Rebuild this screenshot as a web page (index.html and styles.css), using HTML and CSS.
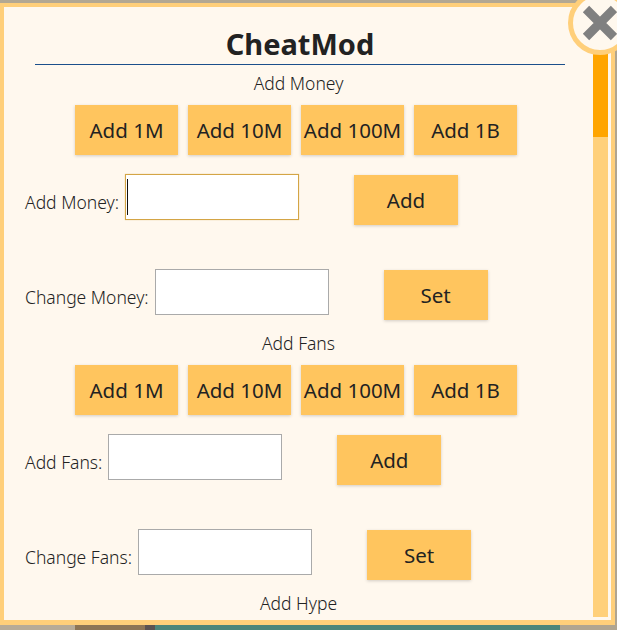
FILE: index.html
```html
<!DOCTYPE html>
<html lang="en">
<head>
    <meta charset="UTF-8">
    <meta name="viewport" content="width=device-width, initial-scale=1.0">
    <title>CheatMod</title>
    <link rel="stylesheet" href="styles.css">
</head>
<body>
    <div class="modal">
        <div class="modal-content">
            <h1 class="modal-title">CheatMod</h1>

            <div class="section-title">Add Money</div>
            <div class="preset-row">
                <button class="btn preset">Add 1M</button>
                <button class="btn preset">Add 10M</button>
                <button class="btn preset">Add 100M</button>
                <button class="btn preset">Add 1B</button>
            </div>
            <div class="input-row first">
                <label for="addMoney">Add Money:</label>
                <span class="field focused"><input type="text" id="addMoney"></span>
                <button class="btn action">Add</button>
            </div>
            <div class="input-row">
                <label for="changeMoney">Change Money:</label>
                <span class="field"><input type="text" id="changeMoney"></span>
                <button class="btn action">Set</button>
            </div>

            <div class="section-title">Add Fans</div>
            <div class="preset-row">
                <button class="btn preset">Add 1M</button>
                <button class="btn preset">Add 10M</button>
                <button class="btn preset">Add 100M</button>
                <button class="btn preset">Add 1B</button>
            </div>
            <div class="input-row first">
                <label for="addFans">Add Fans:</label>
                <span class="field"><input type="text" id="addFans"></span>
                <button class="btn action">Add</button>
            </div>
            <div class="input-row">
                <label for="changeFans">Change Fans:</label>
                <span class="field"><input type="text" id="changeFans"></span>
                <button class="btn action">Set</button>
            </div>

            <div class="section-title">Add Hype</div>
        </div>

        <div class="scrollbar">
            <div class="scroll-thumb"></div>
        </div>

        <button class="close-button" aria-label="Close">
            <svg width="36" height="36" viewBox="0 0 36 36">
                <path d="M4 4 L32 32 M32 4 L4 32" stroke="#808080" stroke-width="9" fill="none"/>
            </svg>
        </button>
    </div>
</body>
</html>
```

FILE: styles.css
```css
* {
    margin: 0;
    padding: 0;
    box-sizing: border-box;
    font-family: "Noto Sans", "Open Sans", sans-serif;
}

body {
    width: 617px;
    height: 630px;
    overflow: hidden;
    background:
        linear-gradient(#b3a893, #b3a893) top / 100% 3px no-repeat,
        linear-gradient(to right, #b7ab97 0 75px, #8d7556 75px 145px, #5b5352 145px 155px, #4c857a 155px 560px, #b0a590 560px);
}

.modal {
    position: relative;
    display: flex;
    width: 615px;
    height: 622px;
    margin-top: 3px;
    background: #fff8ee;
    border: 4px solid #ffcf7a;
    border-bottom-width: 5px;
}

.modal-content {
    flex: 1;
    overflow: hidden;
    color: #222;
}

.modal-title {
    width: 530px;
    margin-left: 31px;
    padding-top: 22px;
    height: 58px;
    text-align: center;
    font-size: 29px;
    font-weight: 700;
    line-height: 30px;
    color: #222;
    border-bottom: 1px solid #1b4f8b;
}

.section-title {
    margin-top: 8px;
    text-align: center;
    font-size: 17.5px;
    font-weight: 300;
    line-height: 20px;
}

.input-row + .section-title {
    margin-top: 13px;
}

.preset-row {
    display: flex;
    gap: 10px;
    margin-top: 12px;
    padding-left: 71px;
}

.btn {
    border: none;
    background: #ffc55e;
    color: #222;
    font-size: 20.5px;
    box-shadow: 0 1px 3px rgba(0, 0, 0, 0.18);
    cursor: pointer;
}

.btn.preset {
    width: 103px;
    height: 50px;
}

.btn.action {
    width: 104px;
    height: 50px;
    margin-top: 1px;
    margin-left: 55px;
}

.input-row {
    display: flex;
    align-items: flex-start;
    padding-left: 21px;
    margin-top: 44px;
}

.input-row.first {
    margin-top: 19px;
}

.input-row label {
    margin-top: 18px;
    margin-right: 6px;
    font-size: 17.5px;
    font-weight: 300;
    line-height: 20px;
}

.field {
    position: relative;
    display: block;
}

.field input {
    display: block;
    width: 174px;
    height: 46px;
    border: 1px solid #aaa;
    background: #fff;
    outline: none;
    font-size: 16px;
}

.field.focused input {
    border-color: #d4a545;
    box-shadow: 0 0 1px rgba(212, 165, 69, 0.6);
}

.field.focused::after {
    content: "";
    position: absolute;
    left: 2px;
    top: 5px;
    width: 1px;
    height: 36px;
    background: #111;
}

.scrollbar {
    width: 15px;
    margin: 43px 3px 3px 0;
    background: #ffd07a;
}

.scroll-thumb {
    height: 87px;
    background: #ffa500;
}

.close-button {
    position: absolute;
    left: 564px;
    top: -16px;
    width: 64px;
    height: 64px;
    display: flex;
    align-items: center;
    justify-content: center;
    border: 5px solid #ffcf7a;
    border-radius: 50%;
    background: #fff8ee;
    cursor: pointer;
}
```
